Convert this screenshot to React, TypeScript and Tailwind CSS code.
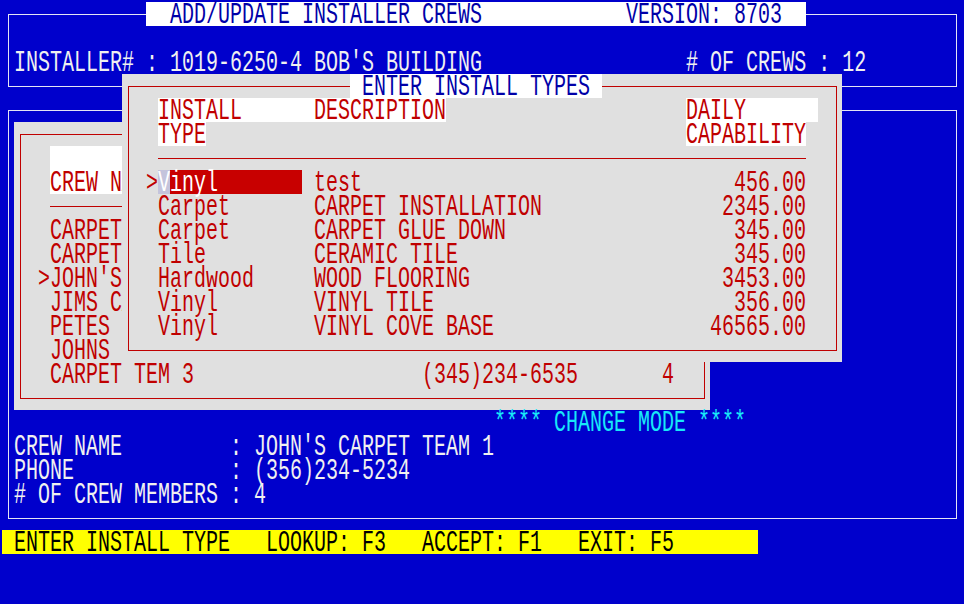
import type { ReactNode } from "react";

// text-mode screen: 80x25 cells of 12x24px, offset 2px
const T = ({ children, className = "" }: { children: ReactNode; className?: string }) => (
	<span className={`inline-block translate-y-[2px] whitespace-pre scale-y-[1.45] ${className}`}>{children}</span>
);

const installTypes = [
	{ type: "Vinyl", desc: "test", qty: "456.00" },
	{ type: "Carpet", desc: "CARPET INSTALLATION", qty: "2345.00" },
	{ type: "Carpet", desc: "CARPET GLUE DOWN", qty: "345.00" },
	{ type: "Tile", desc: "CERAMIC TILE", qty: "345.00" },
	{ type: "Hardwood", desc: "WOOD FLOORING", qty: "3453.00" },
	{ type: "Vinyl", desc: "VINYL TILE", qty: "356.00" },
	{ type: "Vinyl", desc: "VINYL COVE BASE", qty: "46565.00" },
];

const crews = [
	" CARPET TEAM 2",
	" CARPET TEAM 4",
	">JOHN'S CARPET TEAM 1",
	" JIMS CARPET",
	" PETES FLOORS",
	" JOHNS TILE",
	" CARPET TEM 3                   (345)234-6535       4",
];

const InstallTypesModal = () => (
	<div className="absolute left-[122px] top-[74px] h-[288px] w-[720px] bg-[#e0e0e0] pl-[6px] pt-[12px]">
		<div className="h-[265px] w-[709px] border border-[#c00000] pl-[17px] text-[#c00000]">
			<div className="-mt-[13px] ml-[204px] h-[24px] w-[252px] bg-white text-[#0000a8]">
				<T> ENTER INSTALL TYPES </T>
			</div>
			<div className="flex h-[24px]">
				<div className="ml-[12px] w-[288px] bg-white">
					<T>INSTALL      DESCRIPTION</T>
				</div>
				<div className="w-[240px]" />
				<div className="w-[132px] bg-white">
					<T>DAILY</T>
				</div>
			</div>
			<div className="flex h-[24px]">
				<div className="ml-[12px] w-[48px] bg-white">
					<T>TYPE</T>
				</div>
				<div className="w-[480px]" />
				<div className="w-[120px] bg-white">
					<T>CAPABILITY</T>
				</div>
			</div>
			<div className="h-[24px] pt-[12px]">
				<div className="ml-[12px] h-px w-[648px] bg-[#c00000]" />
			</div>
			{installTypes.map((row, i) => (
				<div key={i} className="flex h-[24px]">
					<div className="w-[12px]">
						<T>{i === 0 ? ">" : " "}</T>
					</div>
					{i === 0 ? (
						<div className="flex w-[144px] bg-[#c80000] text-white">
							<div className="w-[12px] bg-[#c4c4dc]">
								<T>{row.type[0]}</T>
							</div>
							<T>{row.type.slice(1)}</T>
						</div>
					) : (
						<div className="w-[144px]">
							<T>{row.type}</T>
						</div>
					)}
					<div className="w-[12px]" />
					<div className="flex w-[492px] justify-between">
						<T>{row.desc}</T>
						<T>{row.qty}</T>
					</div>
				</div>
			))}
		</div>
	</div>
);

export default function App() {
	return (
		<div className="relative h-[604px] w-[964px] overflow-hidden bg-[#0000cc] font-['Liberation_Mono',monospace] text-[20px] leading-[24px] text-[#f0f0f0]">
			<div className="pt-[14px]">
				<div className="ml-[8px] h-[73px] w-[949px] border border-[#e4e4f4]">
					<div className="-mt-[13px] ml-[137px] h-[24px] w-[660px] bg-white text-[#0000a8]">
						<T>{"  ADD/UPDATE INSTALLER CREWS            VERSION: 8703"}</T>
					</div>
					<div className="h-[24px]" />
					<div className="h-[24px] pl-[5px]">
						<T>{"INSTALLER# : 1019-6250-4 BOB'S BUILDING                 # OF CREWS : 12"}</T>
					</div>
				</div>

				<div className="ml-[8px] mt-[23px] h-[409px] w-[949px] border border-[#e4e4f4] pt-[11px]">
					<div className="ml-[5px] h-[288px] w-[696px] bg-[#e0e0e0] pl-[6px] pt-[12px]">
						<div className="h-[265px] w-[685px] border border-[#c00000] pl-[17px] pt-[11px] text-[#c00000]">
							<div className="ml-[12px] h-[24px] w-[624px] bg-white" />
							<div className="ml-[12px] h-[24px] w-[624px] bg-white">
								<T>{"CREW NAME"}</T>
							</div>
							<div className="h-[24px] pt-[12px]">
								<div className="ml-[12px] h-px w-[624px] bg-[#c00000]" />
							</div>
							{crews.map((line, i) => (
								<div key={i} className="h-[24px]">
									<T>{line}</T>
								</div>
							))}
						</div>
					</div>
					<div className="h-[24px] pl-[485px] text-[#18e8f8]">
						<T>**** CHANGE MODE ****</T>
					</div>
					<div className="pl-[5px]">
						<div className="h-[24px]">
							<T>{"CREW NAME         : JOHN'S CARPET TEAM 1"}</T>
						</div>
						<div className="h-[24px]">
							<T>{"PHONE             : (356)234-5234"}</T>
						</div>
						<div className="h-[24px]">
							<T>{"# OF CREW MEMBERS : 4"}</T>
						</div>
					</div>
				</div>

				<div className="ml-[2px] mt-[11px] h-[24px] w-[756px] bg-[#ffff00] text-black">
					<T>{" ENTER INSTALL TYPE   LOOKUP: F3   ACCEPT: F1   EXIT: F5"}</T>
				</div>
			</div>

			<InstallTypesModal />
		</div>
	);
}
